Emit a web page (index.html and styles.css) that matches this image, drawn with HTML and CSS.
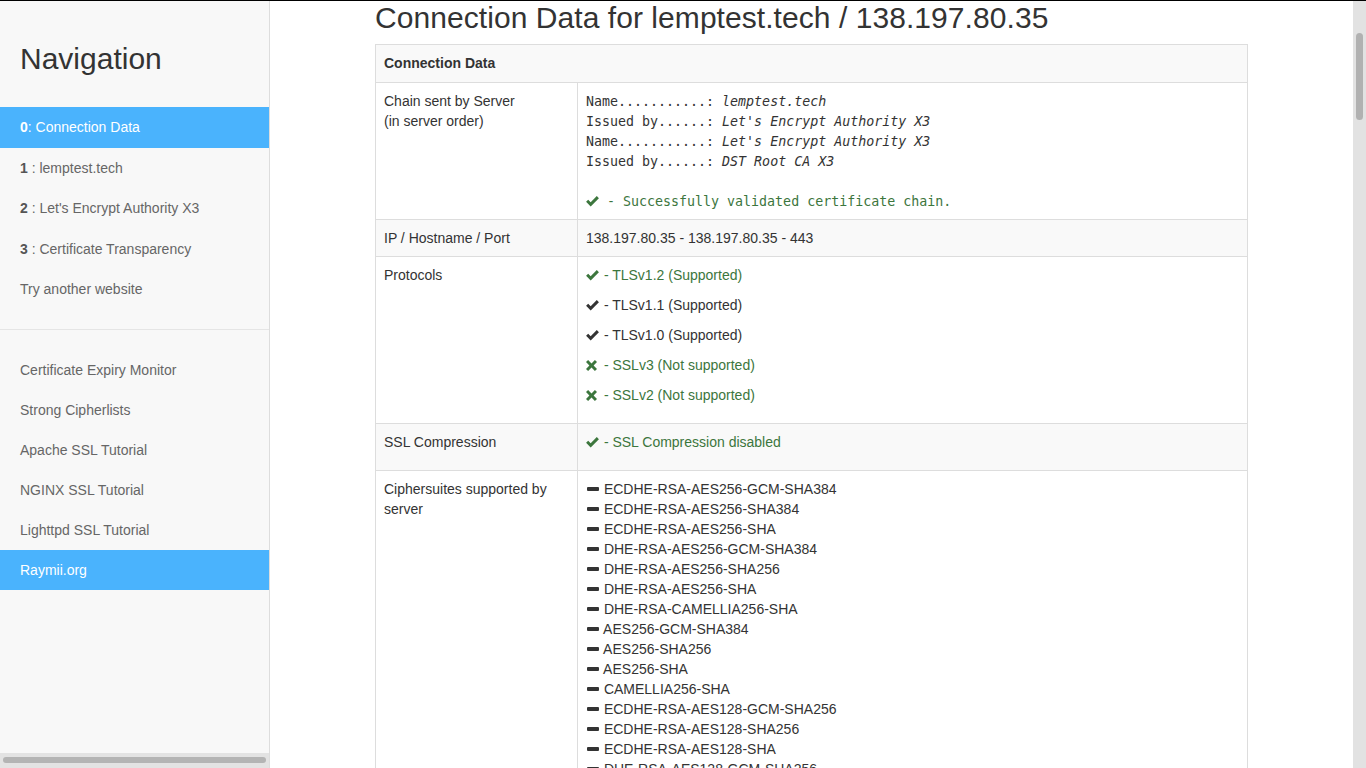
FILE: index.html
```html
<!DOCTYPE html>
<html lang="en">
<head>
<meta charset="utf-8">
<title>Connection Data for lemptest.tech</title>
<link rel="stylesheet" href="styles.css">
</head>
<body>
<div class="app">
  <aside class="sidebar">
    <div class="sidebar-inner">
      <h2 class="nav-title">Navigation</h2>
      <ul class="nav nav-sections">
        <li class="nav-item active"><b>0</b>: Connection Data</li>
        <li class="nav-item"><b>1</b> : lemptest.tech</li>
        <li class="nav-item"><b>2</b> : Let's Encrypt Authority X3</li>
        <li class="nav-item"><b>3</b> : Certificate Transparency</li>
        <li class="nav-item">Try another website</li>
      </ul>
      <ul class="nav nav-links">
        <li class="nav-item">Certificate Expiry Monitor</li>
        <li class="nav-item">Strong Cipherlists</li>
        <li class="nav-item">Apache SSL Tutorial</li>
        <li class="nav-item">NGINX SSL Tutorial</li>
        <li class="nav-item">Lighttpd SSL Tutorial</li>
        <li class="nav-item active">Raymii.org</li>
      </ul>
    </div>
    <div class="hscroll"><div class="hthumb"></div></div>
  </aside>

  <main class="main">
    <div class="container">
      <h1 class="page-title">Connection Data for lemptest.tech / 138.197.80.35</h1>
      <table class="data">
        <tbody>
          <tr>
            <th colspan="2">Connection Data</th>
          </tr>
          <tr>
            <td class="label">Chain sent by Server<br>(in server order)</td>
            <td>
<pre class="chain">Name...........: <i>lemptest.tech</i>
Issued by......: <i>Let's Encrypt Authority X3</i>
Name...........: <i>Let's Encrypt Authority X3</i>
Issued by......: <i>DST Root CA X3</i>

<span class="ok"><svg class="ico ico-ok" viewBox="0 0 14 12"><path d="M0 6.4 L2.3 4.1 L5 6.8 L11.7 0.1 L14 2.4 L5 11.4 Z"/></svg> - Successfully validated certificate chain.</span></pre>
            </td>
          </tr>
          <tr>
            <td class="label">IP / Hostname / Port</td>
            <td>138.197.80.35 - 138.197.80.35 - 443</td>
          </tr>
          <tr>
            <td class="label">Protocols</td>
            <td>
              <p class="item ok"><svg class="ico ico-ok" viewBox="0 0 14 12"><path d="M0 6.4 L2.3 4.1 L5 6.8 L11.7 0.1 L14 2.4 L5 11.4 Z"/></svg> - TLSv1.2 (Supported)</p>
              <p class="item"><svg class="ico ico-ok" viewBox="0 0 14 12"><path d="M0 6.4 L2.3 4.1 L5 6.8 L11.7 0.1 L14 2.4 L5 11.4 Z"/></svg> - TLSv1.1 (Supported)</p>
              <p class="item"><svg class="ico ico-ok" viewBox="0 0 14 12"><path d="M0 6.4 L2.3 4.1 L5 6.8 L11.7 0.1 L14 2.4 L5 11.4 Z"/></svg> - TLSv1.0 (Supported)</p>
              <p class="item ok"><svg class="ico ico-x" viewBox="0 0 12 12"><path d="M0 2.3 L2.3 0 L6 3.7 L9.7 0 L12 2.3 L8.3 6 L12 9.7 L9.7 12 L6 8.3 L2.3 12 L0 9.7 L3.7 6 Z"/></svg> - SSLv3 (Not supported)</p>
              <p class="item ok"><svg class="ico ico-x" viewBox="0 0 12 12"><path d="M0 2.3 L2.3 0 L6 3.7 L9.7 0 L12 2.3 L8.3 6 L12 9.7 L9.7 12 L6 8.3 L2.3 12 L0 9.7 L3.7 6 Z"/></svg> - SSLv2 (Not supported)</p>
            </td>
          </tr>
          <tr>
            <td class="label">SSL Compression</td>
            <td>
              <p class="item ok"><svg class="ico ico-ok" viewBox="0 0 14 12"><path d="M0 6.4 L2.3 4.1 L5 6.8 L11.7 0.1 L14 2.4 L5 11.4 Z"/></svg> - SSL Compression disabled</p>
            </td>
          </tr>
          <tr>
            <td class="label">Ciphersuites supported by server</td>
            <td>
              <div class="cipher"><span class="minus"></span> ECDHE-RSA-AES256-GCM-SHA384</div>
              <div class="cipher"><span class="minus"></span> ECDHE-RSA-AES256-SHA384</div>
              <div class="cipher"><span class="minus"></span> ECDHE-RSA-AES256-SHA</div>
              <div class="cipher"><span class="minus"></span> DHE-RSA-AES256-GCM-SHA384</div>
              <div class="cipher"><span class="minus"></span> DHE-RSA-AES256-SHA256</div>
              <div class="cipher"><span class="minus"></span> DHE-RSA-AES256-SHA</div>
              <div class="cipher"><span class="minus"></span> DHE-RSA-CAMELLIA256-SHA</div>
              <div class="cipher"><span class="minus"></span> AES256-GCM-SHA384</div>
              <div class="cipher"><span class="minus"></span> AES256-SHA256</div>
              <div class="cipher"><span class="minus"></span> AES256-SHA</div>
              <div class="cipher"><span class="minus"></span> CAMELLIA256-SHA</div>
              <div class="cipher"><span class="minus"></span> ECDHE-RSA-AES128-GCM-SHA256</div>
              <div class="cipher"><span class="minus"></span> ECDHE-RSA-AES128-SHA256</div>
              <div class="cipher"><span class="minus"></span> ECDHE-RSA-AES128-SHA</div>
              <div class="cipher"><span class="minus"></span> DHE-RSA-AES128-GCM-SHA256</div>
              <div class="cipher"><span class="minus"></span> DHE-RSA-AES128-SHA256</div>
              <div class="cipher"><span class="minus"></span> DHE-RSA-AES128-SHA</div>
            </td>
          </tr>
        </tbody>
      </table>
    </div>
  </main>

  <div class="vscroll"><div class="vthumb"></div></div>
</div>
</body>
</html>
```

FILE: styles.css
```css
* { box-sizing: border-box; }

html, body {
  margin: 0;
  padding: 0;
  height: 100%;
  overflow: hidden;
  background: #fff;
}

body {
  font-family: "Liberation Sans", Arial, Helvetica, sans-serif;
  font-size: 14px;
  line-height: 20px;
  color: #333;
}

.app {
  display: flex;
  height: 100vh;
  border-top: 1px solid #000;
}

/* Sidebar */
.sidebar {
  width: 270px;
  flex: 0 0 270px;
  background: #f8f8f8;
  border-right: 1px solid #ddd;
  display: flex;
  flex-direction: column;
}

.sidebar-inner {
  flex: 1;
  overflow: hidden;
}

.nav-title {
  margin: 41px 0 32px;
  padding: 0 20px;
  font-size: 30px;
  line-height: 33px;
  font-weight: normal;
  color: #333;
}

.nav {
  list-style: none;
  margin: 0;
  padding: 0;
}

.nav-item {
  padding: 10px 20px;
  line-height: 20px;
  color: #666;
  white-space: nowrap;
}

.nav-sections .nav-item {
  line-height: 20.5px;
}

.nav-item b {
  color: #555;
}

.nav-item.active {
  background: #4ab3fd;
  color: #fff;
}

.nav-item.active b {
  color: #fff;
}

.nav-links {
  margin-top: 19.5px;
  padding-top: 20px;
  border-top: 1px solid #e5e5e5;
}

.hscroll {
  height: 15px;
  background: #e3e3e3;
  padding: 4px 3px 0;
}

.hthumb {
  height: 6px;
  border-radius: 3px;
  background: #b4b4b4;
}

/* Vertical scrollbar */
.vscroll {
  width: 13px;
  flex: 0 0 13px;
  background: #e2e2e2;
  padding: 32px 0 0 3px;
}

.vthumb {
  width: 7px;
  height: 87px;
  border-radius: 4px;
  background: #b1b1b1;
}

/* Main */
.main {
  flex: 1;
  overflow: hidden;
}

.container {
  width: 873px;
  margin: 0 auto;
}

.page-title {
  margin: 0 0 10px;
  font-size: 30px;
  line-height: 33px;
  font-weight: normal;
  letter-spacing: 0.06px;
  color: #333;
}

.data {
  width: 100%;
  border-collapse: collapse;
  border: 1px solid #ddd;
}

.data th,
.data td {
  padding: 8px;
  border: 1px solid #ddd;
  vertical-align: top;
  text-align: left;
  line-height: 20px;
}

.data th {
  font-weight: bold;
  padding-bottom: 9px;
}

.data tr:nth-child(odd) {
  background: #f9f9f9;
}

.data td.label {
  width: 202px;
}

.chain {
  margin: 1px 0 -1px;
  font-family: "DejaVu Sans Mono", "Liberation Mono", monospace;
  font-size: 13.3px;
  line-height: 20px;
  color: #333;
}

.chain i {
  font-style: italic;
}

.ok {
  color: #3c763d;
}

.item {
  margin: 0 0 10px;
}

.ico {
  display: inline-block;
  fill: currentColor;
}

.ico-ok {
  width: 13px;
  height: 11px;
  margin-right: 1px;
  vertical-align: -1px;
}

.ico-x {
  width: 11px;
  height: 11px;
  margin-right: 3px;
  vertical-align: -1px;
}

.item .ico-ok {
  fill: #333;
}

.item.ok .ico-ok,
.chain .ico-ok {
  fill: #3c763d;
}

.chain .ico-ok {
  margin-right: 0;
}

.cipher {
  white-space: nowrap;
}

.minus {
  display: inline-block;
  width: 12px;
  height: 4px;
  margin-left: 1px;
  margin-right: 1px;
  background: #333;
  border-radius: 1px;
  vertical-align: 3px;
}
```
